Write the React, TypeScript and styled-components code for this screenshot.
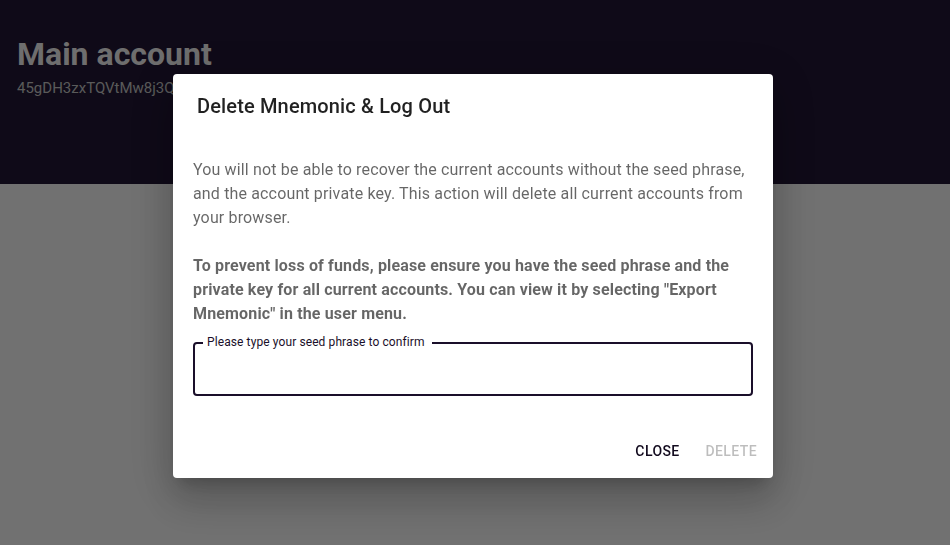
import styled, { createGlobalStyle } from 'styled-components'

const GlobalStyle = createGlobalStyle`
  html, body {
    margin: 0;
    padding: 0;
    height: 100%;
  }
  body {
    font-family: Roboto, "Noto Sans", "Liberation Sans", sans-serif;
    background-color: #e3e3e3;
  }
  #root {
    height: 100%;
  }
`

export default function App() {
  return (
    <>
      <GlobalStyle />
      <Page>
        <Header>
          <AccountName>Main account</AccountName>
          <Address>45gDH3zxTQVtMw8j3Qk9xQZ2nLm7bPfAw4Rt1yVc6uEs</Address>
        </Header>
      </Page>
      <Backdrop>
        <Dialog role="dialog" aria-labelledby="delete-title">
          <Title id="delete-title">Delete Mnemonic &amp; Log Out</Title>
          <Content>
            <Text>
              You will not be able to recover the current accounts without the seed phrase, and
              the account private key. This action will delete all current accounts from your
              browser.
            </Text>
            <Text $bold>
              To prevent loss of funds, please ensure you have the seed phrase and the private key
              for all current accounts. You can view it by selecting "Export Mnemonic" in the user
              menu.
            </Text>
            <Field>
              <Label htmlFor="seed">Please type your seed phrase to confirm</Label>
              <Input id="seed" autoFocus />
            </Field>
          </Content>
          <Actions>
            <Button>Close</Button>
            <Button disabled>Delete</Button>
          </Actions>
        </Dialog>
      </Backdrop>
    </>
  )
}

const Page = styled.div`
  min-height: 100%;
  background-color: #e3e3e3;
`

const Header = styled.header`
  height: 184px;
  box-sizing: border-box;
  padding: 36px 17px 0;
  background-color: #1e1430;
  overflow: hidden;
`

const AccountName = styled.h1`
  margin: 0;
  font-size: 32px;
  font-weight: 700;
  line-height: 36px;
  color: #dcdcdc;
`

const Address = styled.div`
  margin-top: 6px;
  font-size: 15px;
  line-height: 20px;
  color: #b4b4b4;
  white-space: nowrap;
`

const Backdrop = styled.div`
  position: fixed;
  inset: 0;
  background-color: rgba(0, 0, 0, 0.5);
  display: flex;
  justify-content: center;
  align-items: flex-start;
  padding: 74px 4px 0 0;
`

const Dialog = styled.div`
  width: 600px;
  background-color: #ffffff;
  border-radius: 4px;
  box-shadow: 0px 11px 15px -7px rgba(0, 0, 0, 0.2), 0px 24px 38px 3px rgba(0, 0, 0, 0.14),
    0px 9px 46px 8px rgba(0, 0, 0, 0.12);
  display: flex;
  flex-direction: column;
`

const Title = styled.h2`
  margin: 0;
  padding: 16px 24px;
  font-size: 20px;
  font-weight: 500;
  line-height: 32px;
  letter-spacing: 0.0075em;
  color: rgba(0, 0, 0, 0.87);
`

const Content = styled.div`
  padding: 20px 20px 20px;
  display: flex;
  flex-direction: column;
  gap: 24px;
`

const Text = styled.p<{ $bold?: boolean }>`
  margin: 0;
  font-size: 16px;
  line-height: 24px;
  letter-spacing: 0.00938em;
  font-weight: ${({ $bold }) => ($bold ? 700 : 400)};
  color: rgba(0, 0, 0, 0.6);
`

const Field = styled.div`
  position: relative;
  margin-top: -8px;
  height: 54px;
  box-sizing: border-box;
  padding: 0 12px;
  border: 2px solid #1a0f2a;
  border-radius: 4px;
  display: flex;
  align-items: center;
`

const Label = styled.label`
  position: absolute;
  top: -9px;
  left: 8px;
  padding: 0 7px 0 4px;
  background-color: #ffffff;
  font-size: 12px;
  line-height: 14px;
  letter-spacing: 0.1px;
  color: #1a0f2a;
`

const Input = styled.input`
  flex: 1;
  border: 0;
  padding: 0 2px;
  font-family: inherit;
  font-size: 16px;
  color: rgba(0, 0, 0, 0.87);
  background: transparent;
  &:focus {
    outline: none;
  }
`

const Actions = styled.div`
  display: flex;
  justify-content: flex-end;
  align-items: center;
  gap: 8px;
  padding: 17px 8px 9px 8px;
`

const Button = styled.button`
  min-width: 64px;
  height: 36px;
  padding: 6px 8px;
  border: 0;
  border-radius: 4px;
  background: transparent;
  font-family: inherit;
  font-size: 14px;
  font-weight: 500;
  letter-spacing: 0.02857em;
  text-transform: uppercase;
  color: #120a1e;
  cursor: pointer;

  &:disabled {
    color: rgba(0, 0, 0, 0.26);
    cursor: default;
  }
`
